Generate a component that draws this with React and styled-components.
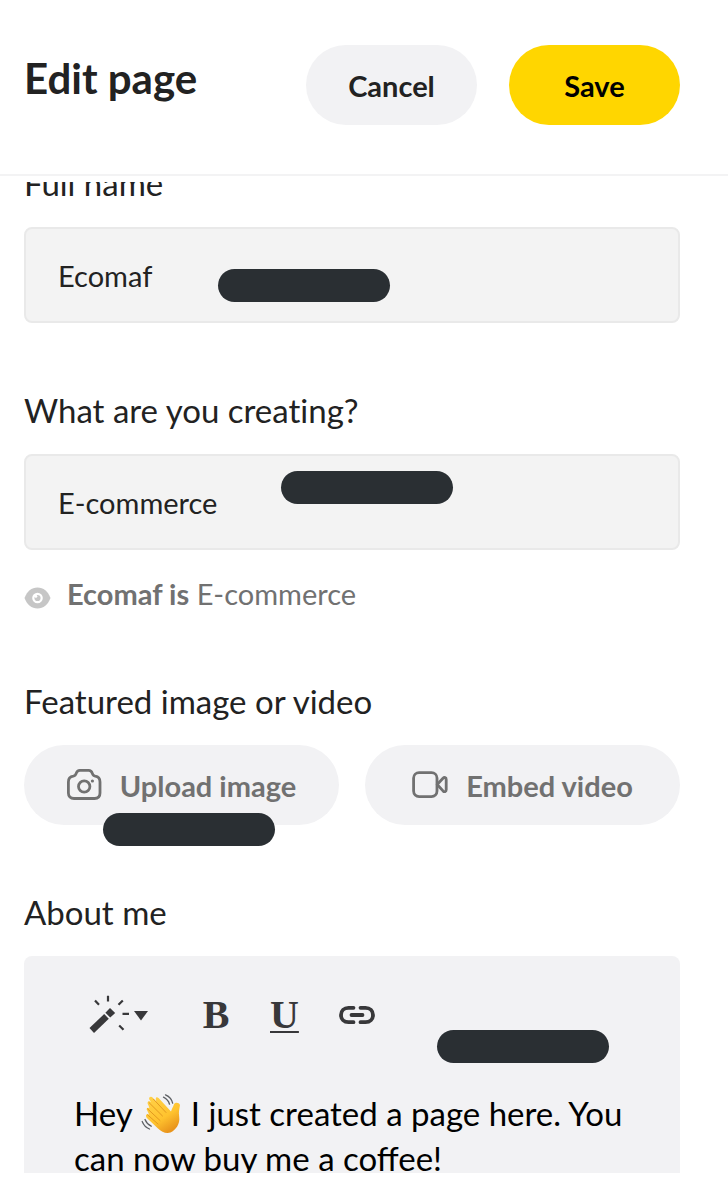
import styled, { createGlobalStyle } from "styled-components"

const GlobalStyle = createGlobalStyle`
  * {
    box-sizing: border-box;
  }
  body {
    margin: 0;
    background-color: #fff;
    color: #222;
    font-family: Lato, "Liberation Sans", sans-serif;
  }
  button,
  input {
    font-family: inherit;
  }
`

const Page = styled.div`
  display: flex;
  flex-direction: column;
  height: 100vh;
  padding-bottom: 27px;
`

const Header = styled.header`
  display: flex;
  flex-shrink: 0;
  align-items: flex-start;
  justify-content: space-between;
  padding: 45px 48px 49px 24px;
  border-bottom: 2px solid #f3f3f4;
`

const Title = styled.h1`
  margin: 0;
  font-size: 42px;
  font-weight: 700;
  line-height: 66px;
`

const Actions = styled.div`
  display: flex;
  gap: 32px;
`

const Button = styled.button`
  display: flex;
  justify-content: center;
  align-items: center;
  gap: 18px;
  min-width: 171px;
  height: 80px;
  padding: 0;
  border: none;
  border-radius: 40px;
  background-color: ${({ $primary }) => ($primary ? "#ffd600" : "#f2f2f4")};
  color: ${({ $primary, $muted }) =>
    $primary ? "#000" : $muted ? "#717171" : "#222"};
  font-size: 29px;
  font-weight: 700;
`

const Content = styled.main`
  flex: 1;
  min-height: 0;
  margin-top: 6px;
  overflow: hidden;
`

const Form = styled.form`
  display: flex;
  flex-direction: column;
  gap: 67px;
  margin-top: -19px;
  padding: 0 48px 0 24px;
`

const Field = styled.div`
  position: relative;
  display: flex;
  flex-direction: column;
  gap: 24px;
`

const Label = styled.label`
  font-size: 33px;
  line-height: 40px;
  font-variant-ligatures: none;
`

const TextInput = styled.input`
  width: 100%;
  height: 96px;
  padding: 0 32px;
  border: 2px solid #e9e9e9;
  border-radius: 8px;
  background-color: #f3f3f3;
  color: #222;
  font-size: 29px;
`

const Hint = styled.p`
  display: flex;
  align-items: center;
  gap: 16px;
  margin: 0;
  color: #717171;
  font-size: 29px;
  line-height: 40px;
`

const MediaButtons = styled.div`
  display: grid;
  grid-template-columns: 1fr 1fr;
  gap: 26px;
`

const Editor = styled.div`
  padding: 32px 48px 32px 50px;
  border-radius: 8px;
  background-color: #f2f2f4;
`

const Toolbar = styled.div`
  display: flex;
  align-items: center;
  gap: 40px;
  height: 54px;
  padding-left: 14px;
`

const Tool = styled.button`
  display: flex;
  align-items: center;
  justify-content: center;
  min-width: 28px;
  padding: 0;
  border: none;
  background: none;
  color: #38383a;
`

const MenuTool = styled(Tool)`
  padding-right: 14px;
`

const LetterTool = styled(Tool)`
  font-family: "Liberation Serif", serif;
  font-size: 40px;
  font-weight: 700;
  line-height: 48px;
  text-decoration: ${({ $underline }) => ($underline ? "underline" : "none")};
  text-decoration-thickness: 2px;
  text-underline-offset: 3px;
`

const Message = styled.div`
  margin-top: 49px;
  color: #000;
  font-size: 33px;
  line-height: 45px;
  outline: none;

  svg {
    margin: 0 1px;
    vertical-align: -8px;
  }
`

// solid bar that hides private details
const Redaction = styled.span`
  position: absolute;
  top: ${({ $top }) => $top}px;
  left: ${({ $left }) => $left}px;
  width: 172px;
  height: 33px;
  border-radius: 17px;
  background-color: #2a2f33;
`

const EyeIcon = () => (
  <svg width="27" height="40" viewBox="0 0 27 40" aria-hidden="true">
    <path
      d="M0.500 24C3 17.500 7.500 13.500 13.500 13.500S24 17.500 26.500 24C24 30.500 19.500 34.500 13.500 34.500S3 30.500 0.500 24Z"
      fill="#c6c6c6"
    />
    <circle cx="13.500" cy="24" r="4.200" fill="none" stroke="#fff" strokeWidth="2.200" />
    <circle cx="11.800" cy="22.300" r="1.500" fill="#fff" />
  </svg>
)

const CameraIcon = () => (
  <svg
    width="35"
    height="32"
    viewBox="0 0 35 32"
    fill="none"
    stroke="currentColor"
    strokeWidth="2.8"
    aria-hidden="true"
  >
    <path d="M1.400 13C1.400 9.800 3.200 7.600 6.300 7.200C8.200 6.900 8.800 5.800 9.300 4.200C9.900 2.300 10.900 1.400 12.800 1.400H21.700C23.600 1.400 24.600 2.300 25.200 4.200C25.700 5.800 26.300 6.900 28.200 7.200C31.300 7.600 33 9.800 33 13V24C33 27.500 31 29.500 27.500 29.500H7C3.500 29.500 1.400 27.500 1.400 24Z" />
    <circle cx="17.200" cy="17.500" r="5.700" />
    <circle cx="25.400" cy="12" r="1.600" fill="currentColor" stroke="none" />
  </svg>
)

const VideoIcon = () => (
  <svg
    width="36"
    height="32"
    viewBox="0 0 36 32"
    fill="none"
    stroke="currentColor"
    strokeWidth="2.8"
    strokeLinejoin="round"
    aria-hidden="true"
  >
    <rect x="1.600" y="3.600" width="23.400" height="24" rx="5.500" />
    <path d="M25.200 15.500L31 9.300C32.400 7.900 34.200 8.500 34.200 10.400V20.800C34.200 22.700 32.400 23.300 31 21.900Z" />
  </svg>
)

const WandIcon = () => (
  <svg width="60" height="40" viewBox="0 0 60 40" aria-hidden="true">
    <g fill="currentColor">
      <path d="M1.500 33L16.200 19L20.800 23.800L6 38Z" />
      <path d="M17.400 17.800L22 13.100L27.200 18L22.200 22.600Z" />
      <path d="M46 16H60L53 25.500Z" />
    </g>
    <path
      d="M20 0.800V6.500M7 5.500L11 9.800M34.800 5.500L30.500 9.800M34.500 18.800H41M31.200 30.500L35.500 34.800"
      stroke="currentColor"
      strokeWidth="2.2"
      fill="none"
    />
  </svg>
)

const LinkIcon = () => (
  <svg
    width="36"
    height="20"
    viewBox="0 0 36 20"
    fill="none"
    stroke="currentColor"
    strokeWidth="3.8"
    strokeLinecap="round"
    aria-hidden="true"
  >
    <path d="M14.500 2.800H9.500C5 2.800 2 5.700 2 10S5 17.200 9.500 17.200H14.500" />
    <path d="M21.500 2.800H26.500C31 2.800 34 5.700 34 10S31 17.200 26.500 17.200H21.500" />
    <path d="M12.500 10H23.500" />
  </svg>
)

const WaveIcon = () => (
  <svg width="40" height="40" viewBox="0 0 40 40" aria-hidden="true">
    <defs>
      <linearGradient id="skin" x1="0" y1="0" x2="0.6" y2="1">
        <stop offset="0" stopColor="#ffd24a" />
        <stop offset="0.65" stopColor="#ffc32e" />
        <stop offset="1" stopColor="#e9951c" />
      </linearGradient>
    </defs>
    <path
      d="M6.200 16.500C4.600 14.700 6.700 12.600 8.500 14.200L7.400 11.200C5.200 8 8 6 10.200 8.200L8.300 5.600C7.200 3 10.300 1.600 12 4L15.400 7.600C13.800 4 15.200 1.800 17.800 4.200L30 17.500C30.600 15.300 31.800 13.500 32.800 10.700C33.800 8 38 8.200 39 11C38.500 14.600 37.400 18 38.200 23C39.200 30 34.800 36 29.500 38.500C25 40 20.500 37.800 17 34.500L6.400 24.500C3.500 21.600 5.600 19.200 8.200 20.800Z"
      fill="url(#skin)"
    />
    <path
      d="M6.500 14.800L19 26.500M8 8.600L21.500 22M12.500 5.200L25 18.500M6.500 20.800L17 30"
      fill="none"
      stroke="#e39a20"
      strokeWidth="1"
      strokeLinecap="round"
    />
    <path
      d="M22.500 3.200C25.600 4.800 27.600 7 28.500 10.200M24.500 0.800C28.600 2.600 31 5.600 31.600 9.200M4 25.500C5.200 28.500 7.200 30.800 10.200 32.200M1.200 27.500C2.600 31 5 33.600 8.500 35"
      fill="none"
      stroke="#5d6064"
      strokeWidth="1.3"
      strokeLinecap="round"
    />
  </svg>
)

const App = () => {
  return (
    <>
      <GlobalStyle />
      <Page>
        <Header>
          <Title>Edit page</Title>
          <Actions>
            <Button type="button">Cancel</Button>
            <Button type="submit" form="edit-page" $primary>
              Save
            </Button>
          </Actions>
        </Header>
        <Content>
          <Form id="edit-page">
            <Field>
              <Label htmlFor="name">Full name</Label>
              <TextInput id="name" defaultValue="Ecomaf" />
              <Redaction $top={106} $left={194} />
            </Field>
            <Field>
              <Label htmlFor="creating">What are you creating?</Label>
              <TextInput id="creating" defaultValue="E-commerce" />
              <Hint>
                <EyeIcon />
                <span>
                  <b>Ecomaf is</b> E-commerce
                </span>
              </Hint>
              <Redaction $top={81} $left={257} />
            </Field>
            <Field>
              <Label as="div">Featured image or video</Label>
              <MediaButtons>
                <Button type="button" $muted>
                  <CameraIcon />
                  Upload image
                </Button>
                <Button type="button" $muted>
                  <VideoIcon />
                  Embed video
                </Button>
              </MediaButtons>
              <Redaction $top={132} $left={79} />
            </Field>
            <Field>
              <Label as="div" id="about-label">
                About me
              </Label>
              <Editor>
                <Toolbar>
                  <MenuTool type="button" aria-label="Styles">
                    <WandIcon />
                  </MenuTool>
                  <LetterTool type="button">B</LetterTool>
                  <LetterTool type="button" $underline>
                    U
                  </LetterTool>
                  <Tool type="button" aria-label="Link">
                    <LinkIcon />
                  </Tool>
                </Toolbar>
                <Message
                  role="textbox"
                  aria-multiline="true"
                  aria-labelledby="about-label"
                  contentEditable
                  suppressContentEditableWarning
                >
                  Hey <WaveIcon /> I just created a page here. You can now buy me
                  a coffee!
                </Message>
              </Editor>
              <Redaction $top={138} $left={413} />
            </Field>
          </Form>
        </Content>
      </Page>
    </>
  )
}

export default App
